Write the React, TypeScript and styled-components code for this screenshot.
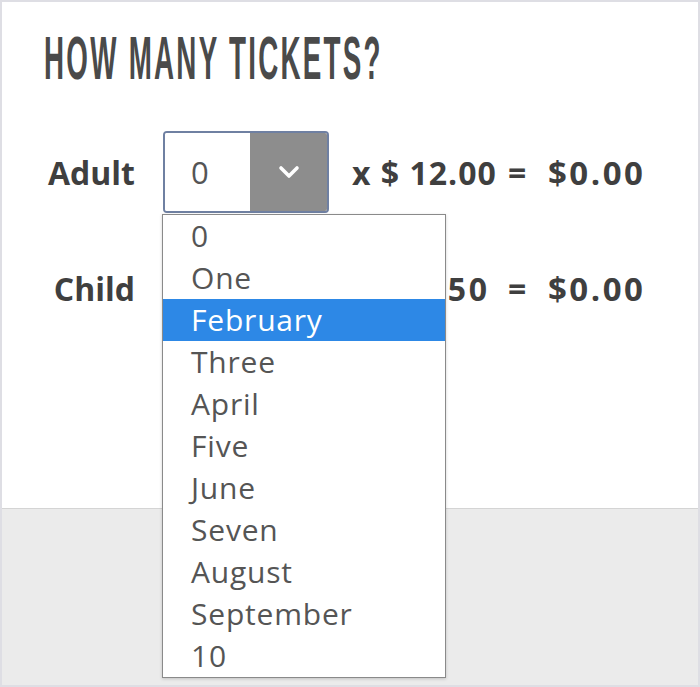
import styled, { createGlobalStyle } from 'styled-components'

const GlobalStyle = createGlobalStyle`
  html, body {
    margin: 0;
    padding: 0;
    width: 700px;
    height: 687px;
    overflow: hidden;
    background: #fff;
  }
  * { box-sizing: border-box; }
`

const options = [
  '0',
  'One',
  'February',
  'Three',
  'April',
  'Five',
  'June',
  'Seven',
  'August',
  'September',
  '10',
]

const rows = [
  { label: 'Adult', unit: 'x $ 12.00', total: '$0.00', open: true },
  { label: 'Child', unit: 'x $ 8.50', total: '$0.00', open: false },
]

export default function App() {
  return (
    <>
      <GlobalStyle />
      <Frame>
        <Panel>
          <Heading>HOW MANY TICKETS?</Heading>
          <Rows>
            {rows.map((row) => (
              <Row key={row.label}>
                <Label>{row.label}</Label>
                <SelectWrap $open={row.open}>
                  <SelectBox>
                    <Value>0</Value>
                    <Toggle>
                      <svg width="22" height="14" viewBox="0 0 22 14">
                        <polyline
                          points="3,3 11,11 19,3"
                          fill="none"
                          stroke="#fff"
                          strokeWidth="3.6"
                          strokeLinecap="round"
                          strokeLinejoin="round"
                        />
                      </svg>
                    </Toggle>
                  </SelectBox>
                  {row.open && (
                    <List>
                      {options.map((opt) => (
                        <Option key={opt} $active={opt === 'February'}>
                          {opt}
                        </Option>
                      ))}
                    </List>
                  )}
                </SelectWrap>
                <Price>
                  <Unit $wide={row.label === 'Child'}>{row.unit}</Unit>
                  <Equals>=</Equals>
                  <Total>{row.total}</Total>
                </Price>
              </Row>
            ))}
          </Rows>
        </Panel>
        <Footer />
      </Frame>
    </>
  )
}

const Frame = styled.div`
  width: 700px;
  height: 687px;
  border: 2px solid #dedee4;
  display: flex;
  flex-direction: column;
  font-family: 'Open Sans', 'Liberation Sans', sans-serif;
`

const Panel = styled.div`
  height: 507px;
  flex-shrink: 0;
  background: #fff;
  border-bottom: 1px solid #d4d4d4;
  padding: 26px 0 0 42px;
`

const Heading = styled.h1`
  margin: 0;
  height: 60px;
  font-family: 'Liberation Sans', Arial, sans-serif;
  font-size: 61px;
  line-height: 60px;
  font-weight: 700;
  letter-spacing: 5px;
  color: #4a4a4a;
  white-space: nowrap;
  transform: scaleX(0.455);
  transform-origin: left center;
`

const Rows = styled.div`
  margin-top: 43px;
  display: flex;
  flex-direction: column;
  gap: 34px;
`

const Row = styled.div`
  display: flex;
  align-items: center;
  height: 82px;
`

const Label = styled.div`
  width: 91px;
  text-align: right;
  font-size: 32px;
  font-weight: 700;
  color: #3f3f3f;
  margin-right: 28px;
`

const SelectWrap = styled.div<{ $open: boolean }>`
  position: relative;
  z-index: ${(p) => (p.$open ? 2 : 1)};
`

const SelectBox = styled.div`
  width: 166px;
  height: 82px;
  display: flex;
  border: 2px solid #6f80a2;
  border-radius: 4px;
  overflow: hidden;
`

const Value = styled.div`
  width: 85px;
  display: flex;
  align-items: center;
  padding-left: 26px;
  font-size: 31px;
  color: #555;
  background: #fff;
`

const Toggle = styled.div`
  flex: 1;
  display: flex;
  align-items: center;
  justify-content: center;
  background: #8d8d8d;
`

const List = styled.ul`
  position: absolute;
  top: calc(100% + 1px);
  left: -1px;
  width: 284px;
  margin: 0;
  padding: 0;
  list-style: none;
  background: #fff;
  border: 1px solid #8a8a8a;
  box-shadow: 0 1px 3px rgba(0, 0, 0, 0.18);
`

const Option = styled.li<{ $active: boolean }>`
  height: 42px;
  line-height: 42px;
  padding-left: 28px;
  font-size: 30px;
  letter-spacing: 0.8px;
  color: ${(p) => (p.$active ? '#fff' : '#555')};
  background: ${(p) => (p.$active ? '#2d88e6' : 'transparent')};
`

const Price = styled.div`
  display: flex;
  align-items: center;
  margin-left: 23px;
  font-size: 32px;
  font-weight: 700;
  color: #3f3f3f;
  letter-spacing: 1px;
  white-space: pre;
`

const Unit = styled.span<{ $wide: boolean }>`
  width: 156px;
  letter-spacing: ${(p) => (p.$wide ? '2.5px' : '1px')};
`

const Equals = styled.span`
  width: 40px;
`

const Total = styled.span`
  font-size: 33px;
  letter-spacing: 2.5px;
`

const Footer = styled.div`
  flex: 1;
  background: #ebebeb;
`
